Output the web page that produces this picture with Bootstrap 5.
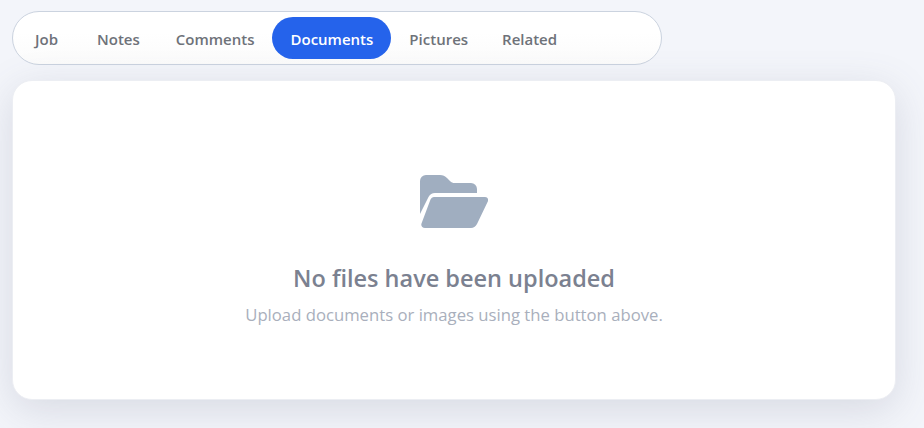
<!DOCTYPE html>
<html lang="en">
<head>
  <meta charset="UTF-8" />
  <meta name="viewport" content="width=device-width, initial-scale=1.0"/>
  <title>Documents</title>
  <link href="https://cdn.jsdelivr.net/npm/bootstrap@5.3.2/dist/css/bootstrap.min.css" rel="stylesheet">
  <style>
    body {
      font-family: "Open Sans", "Noto Sans", sans-serif;
      background: #f3f5fa;
      height: 428px;
      overflow: hidden;
    }
    .page-wrap { padding: 11px 28px 0 12px; }

    /* TABS */
    .job-tabs {
      width: 650px;
      height: 54px;
      padding: 5px 4px;
      border: 1px solid #cbd3df;
      border-radius: 27px;
      background: linear-gradient(180deg, #fff 40%, #fbfbfb 100%);
    }
    .job-tabs .nav-link {
      height: 42px;
      padding: 0 18px;
      font-size: 15px;
      font-weight: 600;
      line-height: 44px;
      color: #6e7279;
      border-radius: 21px;
    }
    .job-tabs .nav-item:first-child .nav-link { padding-right: 21px; }
    .job-tabs .nav-item:nth-child(5) .nav-link { padding-right: 16px; }
    .job-tabs .nav-link.active {
      background: #2563eb;
      color: #fff;
    }

    /* EMPTY PANEL */
    .docs-panel {
      height: 320px;
      margin-top: 15px;
      padding-top: 22px;
      background: #fff;
      border: 1px solid #eceef3;
      border-radius: 20px;
      box-shadow: 0 10px 40px rgba(90, 95, 120, 0.18);
    }
    .folder-icon { width: 68px; height: 53px; margin-bottom: 34px; fill: #a0aec0; }
    .empty-title { font-size: 23.5px; font-weight: 600; line-height: 32px; margin-bottom: 9px; color: #7b8190; }
    .empty-sub { font-size: 16.7px; line-height: 24px; color: #a9afbc; }
  </style>
</head>
<body>
  <div class="page-wrap">
    <ul class="nav job-tabs">
      <li class="nav-item"><a class="nav-link" href="#">Job</a></li>
      <li class="nav-item"><a class="nav-link" href="#">Notes</a></li>
      <li class="nav-item"><a class="nav-link" href="#">Comments</a></li>
      <li class="nav-item"><a class="nav-link active" href="#">Documents</a></li>
      <li class="nav-item"><a class="nav-link" href="#">Pictures</a></li>
      <li class="nav-item"><a class="nav-link" href="#">Related</a></li>
    </ul>

    <div class="docs-panel d-flex flex-column align-items-center justify-content-center text-center">
      <svg class="folder-icon" viewBox="0 0 68 53">
        <path d="M0 6a6 6 0 0 1 6-6h14c3 0 5 1 7 3l3 3c1.500 1.500 2.500 2 5 2h16a6 6 0 0 1 6 6v4H15c-3 0-5 1.500-6.500 4L0 39z"/>
        <path d="M14 22H65c2.500 0 3.800 2.300 2.800 4.500L57 49c-1.500 2.800-3.500 4-6 4H5c-3 0-4.500-2.600-3.300-5L10.500 24.500c.8-1.600 2-2.500 3.500-2.500z"/>
      </svg>
      <div class="empty-title">No files have been uploaded</div>
      <div class="empty-sub">Upload documents or images using the button above.</div>
    </div>
  </div>
  <script src="https://cdn.jsdelivr.net/npm/bootstrap@5.3.2/dist/js/bootstrap.bundle.min.js"></script>
</body>
</html>
